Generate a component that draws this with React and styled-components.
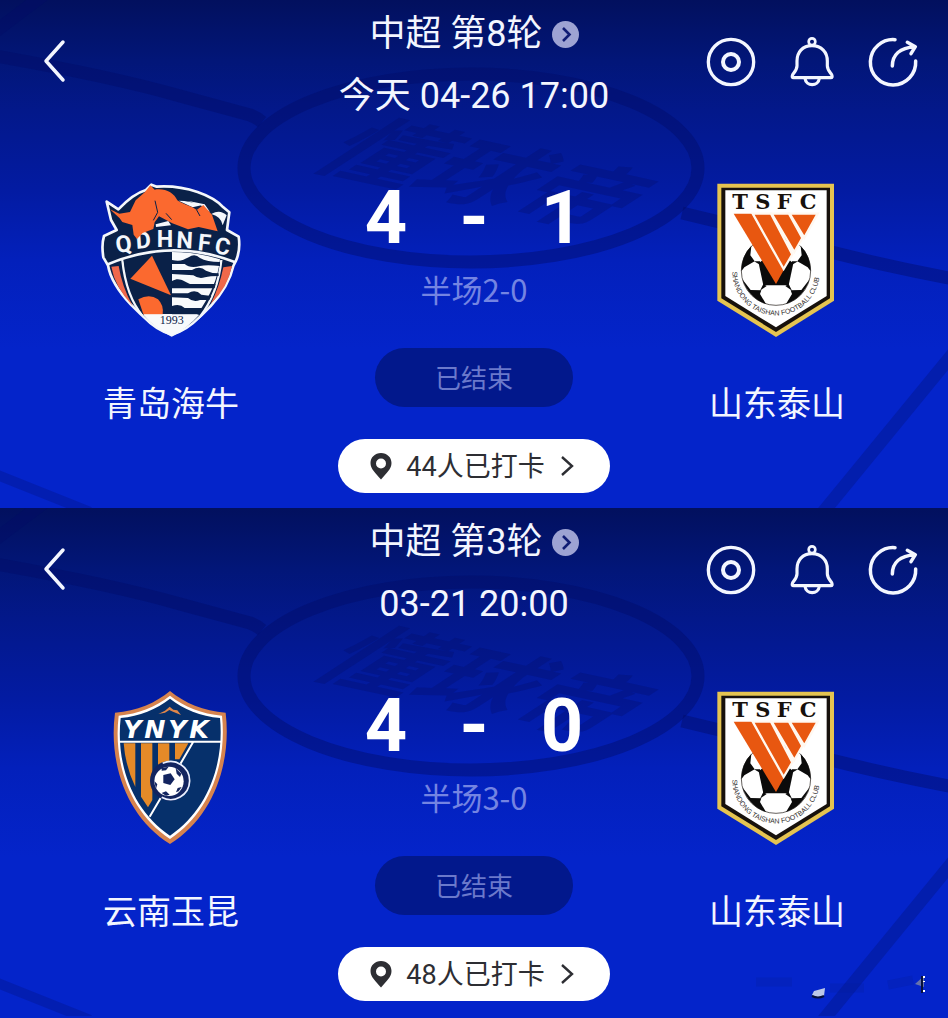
import React from 'react';
import styled, { createGlobalStyle } from 'styled-components';

const GlobalStyle = createGlobalStyle`
  * { box-sizing: border-box; }
  body { margin: 0; background: #0424ca; }
  button { font: inherit; color: inherit; border: 0; padding: 0; background: none; cursor: pointer; }
  h1, h2, p { margin: 0; font-weight: 400; }
`;

const Page = styled.main`
  display: flex;
  flex-direction: column;
  min-height: 100vh;
  color: #f3f6ff;
  font-family: Roboto, 'Noto Sans CJK SC', sans-serif;
`;

const Panel = styled.section`
  position: relative;
  overflow: hidden;
  flex-grow: ${(p) => (p.$last ? 1 : 0)};
  padding: 12px 0 15px;
  background: linear-gradient(#02105e 0, #021678 60px, #03188a 110px, #031ba2 190px, #0320bb 260px, #0424ca 350px);
`;

const Pitch = styled.svg`
  position: absolute;
  top: 0;
  left: 0;
  width: 100%;
  height: 508px;
`;

const Header = styled.header`
  position: relative;
  display: grid;
  grid-template-columns: 1fr auto 1fr;
  align-items: start;
  padding: 0 30px;
`;

const Titles = styled.div`
  display: flex;
  flex-direction: column;
  align-items: center;
  gap: 18px;
  font-size: 36px;
  line-height: 44px;
  white-space: nowrap;
`;

const Round = styled.button`
  display: flex;
  align-items: center;
  gap: 9px;
  line-height: 44px;
`;

const Kickoff = styled.p``;

const Actions = styled.nav`
  display: flex;
  justify-content: ${(p) => (p.$end ? 'flex-end' : 'flex-start')};
  gap: 31px;
  padding-top: 25px;
`;

const IconButton = styled.button`
  width: 50px;
  height: 50px;
  svg { display: block; width: 100%; height: 100%; }
`;

const Body = styled.div`
  position: relative;
  display: grid;
  grid-template-columns: 1fr 272px 1fr;
  padding: 65px 4px 0;
`;

const Team = styled.div`
  display: flex;
  flex-direction: column;
  align-items: center;
  gap: 45px;
`;

const Crest = styled.svg`
  width: 160px;
  height: 154px;
`;

const TeamName = styled.h2`
  font-size: 34px;
  line-height: 44px;
`;

const Center = styled.div`
  display: flex;
  flex-direction: column;
  align-items: center;
`;

const Score = styled.p`
  display: grid;
  grid-template-columns: 88px 88px 88px;
  justify-items: center;
  color: #fff;
  font-size: 74px;
  font-weight: 700;
  line-height: 70px;
`;

const HalfTime = styled.p`
  margin: 16px 0 39px;
  color: #7484e2;
  font-family: 'Noto Sans CJK SC', sans-serif;
  font-size: 31px;
  line-height: 40px;
`;

const Status = styled.p`
  width: 198px;
  padding-top: 3px;
  border-radius: 30px;
  background: #02188c;
  color: #6b79cb;
  font-size: 26px;
  line-height: 56px;
  text-align: center;
`;

const CheckIn = styled.button`
  display: flex;
  align-items: center;
  justify-content: center;
  gap: 14px;
  width: 100%;
  height: 54px;
  margin-top: 32px;
  padding-right: 3px;
  border-radius: 27px;
  background: #fff;
  color: #2d2e33;
  font-size: 27px;
  line-height: 51px;
  white-space: nowrap;
  span { padding-top: 3px; }
`;

const Glints = styled.svg`
  position: absolute;
  right: 0;
  bottom: 0;
  width: 218px;
  height: 68px;
`;

function PitchLines() {
  return (
    <Pitch viewBox="0 0 948 508" preserveAspectRatio="xMidYMin slice" aria-hidden="true">
      <g fill="none" stroke="#020d66" strokeOpacity=".42" strokeWidth="13">
        <path d="M-10 55Q110 76 180 96L250 115Q256 117 262 122M682 213L740 227Q850 260 960 280" />
        <ellipse cx="471" cy="168" rx="227" ry="94" />
        <path d="M956 350L820 516" strokeOpacity=".28" />
        <path d="M-10 472L90 512" strokeOpacity=".24" strokeWidth="10" />
        <path d="M-8 34L50 -10" strokeWidth="13" />
      </g>
      <text
        transform="matrix(1.02 .22 -.95 .62 306 165)"
        fill="#020d66"
        fillOpacity=".3"
        fontFamily="'Noto Sans CJK SC', sans-serif"
        fontSize="96"
        fontWeight="700"
      >
        懂球帝
      </text>
    </Pitch>
  );
}

const line = { fill: 'none', stroke: 'currentColor', strokeLinecap: 'round', strokeLinejoin: 'round' };

const BackIcon = () => (
  <svg viewBox="0 0 50 50" {...line} strokeWidth="3.5">
    <path d="M33 5L16 24L33 43" />
  </svg>
);

const WatchIcon = () => (
  <svg viewBox="0 0 150 150" {...line} strokeWidth="10">
    <circle cx="75" cy="75" r="68" />
    <circle cx="75" cy="75" r="24" strokeWidth="12" />
  </svg>
);

const BellIcon = () => (
  <svg viewBox="0 0 150 150" {...line} strokeWidth="9.500">
    <circle cx="75" cy="14" r="10" strokeWidth="8" />
    <path d="M75 26C46 26 30 46 30 72V86C30 97 25 102 17 113Q13 122 20 122H131Q138 122 134 113C126 102 121 97 121 86V72C121 46 104 26 75 26Z" />
    <path d="M54 124C57 149 94 149 97 124" />
  </svg>
);

const ShareIcon = () => (
  <svg viewBox="0 0 150 150" {...line} strokeWidth="10.500">
    <path d="M81 8A68 68 0 1 0 143 72" />
    <path d="M73 87C73 54 96 32 140 29M118 16L142 29L129 50" />
  </svg>
);

const RoundArrow = () => (
  <svg width="27" height="27" viewBox="0 0 27 27" aria-hidden="true">
    <circle cx="13.5" cy="13.5" r="13.5" fill="#9da3d3" />
    <path d="M11 7L17.5 13.5L11 20" fill="none" stroke="#101c74" strokeWidth="2.6" />
  </svg>
);

const PinIcon = () => (
  <svg width="22" height="28" viewBox="0 0 22 28" aria-hidden="true">
    <path fillRule="evenodd" fill="#2d2e33" d="M11 1C5 1 .5 5.400 .5 11C.5 17 5.500 21 11 27.500C16.500 21 21.500 17 21.500 11C21.500 5.400 17 1 11 1ZM11 6.500A5 5 0 1 1 11 16.500A5 5 0 1 1 11 6.500Z" />
  </svg>
);

const ChevronIcon = () => (
  <svg width="16" height="22" viewBox="0 0 16 22" aria-hidden="true">
    <path d="M3 2L13 11L3 20" fill="none" stroke="#2d2e33" strokeWidth="2.400" />
  </svg>
);

function QingdaoCrest() {
  return (
    <Crest viewBox="3 39 480 462" role="img" aria-label="青岛海牛">
      <path
        d="M245 496C160 455 66 360 54 286L40 262Q34 225 42 198L80 180L63 150L50 95L85 118C110 92 140 68 168 60L184 44L200 50C290 44 370 78 400 112L418 127L411 180L446 200Q452 240 438 272L430 288C412 370 330 455 245 496Z"
        fill="#0a2148" stroke="#f4f7fb" strokeWidth="8" strokeLinejoin="round"
      />
      <path d="M64 290L86 288Q96 350 128 408Q74 350 64 290Z" fill="#f0684a" />
      <path d="M426 288L400 292Q388 352 362 402Q414 352 426 288Z" fill="#f0684a" />
      <path d="M97 270Q108 380 160 440Q200 482 245 494Q290 482 330 440Q384 370 394 270" fill="#0a2148" stroke="#f4f7fb" strokeWidth="7" />
      <path d="M246 246Q322 246 390 268Q382 350 322 432H160Q200 482 245 494Q292 480 324 432L246 414Z" fill="#f8fafc" />
      <g fill="#0a2148">
        <path d="M246 270C270 276 280 270 296 262Q314 248 330 264Q350 276 390 276V288Q350 284 330 288Q300 296 284 282H246Z" />
        <path d="M246 300H306Q330 286 348 302Q364 310 386 310V318Q360 318 345 322Q326 328 310 316L246 312Z" />
        <path d="M246 333C270 320 282 336 300 342H377L374 355H246Z" />
        <path d="M246 370H294Q316 356 334 374L364 378L358 390H330Q310 398 294 384L246 382Z" />
        <path d="M246 408Q270 400 284 414H342L324 433H246Z" />
        <path d="M100 265L245 246V432H158Q116 370 100 265Z" />
      </g>
      <path d="M186 257L121 326L243 376Z" fill="#fb692f" />
      <path d="M145 388Q178 370 204 388Q222 406 218 433H160Z" fill="#fb692f" />
      <path d="M160 434H328Q290 478 245 490Q198 478 160 434Z" fill="#f8fafc" />
      <path d="M50 284Q245 202 436 277" fill="none" stroke="#f4f7fb" strokeWidth="8" />
      <path d="M266 92Q300 92 334 106L308 112ZM292 92L344 103L360 126L332 106ZM364 132Q390 116 410 136L398 166Q394 140 364 132Z" fill="#f4f7fb" />
      <text x="80 139 200 258 322 371" y="249 236 231 233 240 249" rotate="-8 -4 0 3 6 10" fill="#f4f7fb" fontFamily="Roboto, sans-serif" fontSize="70" fontWeight="700">QDHNFC</text>
      <path d="M197 163L235 153L243 166L198 171Z" fill="#f4f7fb" />
      <path
        d="M60 118L88 131L120 126L137 91L165 66L181 46L194 59C226 54 252 69 262 91C284 106 307 109 320 120L340 105L366 134L383 184L326 171L294 178L247 160L207 139L194 157L190 177L158 189L141 207L131 194L127 165L97 156L89 145Z"
        fill="#fb692f"
      />
      <path d="M195 92L203 127L190 151M228 130L245 149M320 120L330 138" fill="none" stroke="#0a2148" strokeWidth="3" />
      <text x="245" y="462" textAnchor="middle" fill="#0a2148" fontFamily="'Liberation Serif', serif" fontSize="36">1993</text>
    </Crest>
  );
}

function ShandongCrest({ id }) {
  return (
    <Crest viewBox="-9 39 480 462" role="img" aria-label="山东泰山">
      <path d="M52 41H402V392L228 501L52 392Z" fill="#e5c451" />
      <path d="M64 53H390V385L228 486L64 385Z" fill="#17110c" />
      <path d="M76 61H380V378L228 472L76 378Z" fill="#fff" />
      <text x="97 166 230 299" y="117" fill="#17110c" fontFamily="'DejaVu Serif', serif" fontSize="63" fontWeight="700">TSFC</text>
      <circle cx="228" cy="302" r="104" fill="#fff" stroke="#17110c" strokeWidth="2" />
      <g fill="#0b0b0b">
        <path d="M188 207Q228 191 268 207L252 216H204Z" />
        <path d="M154 228L151 256L164 274L133 292L124 304Q124 258 154 228Z" />
        <path d="M302 228L305 256L292 274L323 292L332 304Q332 258 302 228Z" />
        <path d="M176 280L228 238L280 280L266 346H190Z" />
        <path d="M127 328L152 360L184 361L180 372L198 402Q148 386 127 328Z" />
        <path d="M329 328L304 360L272 361L276 372L258 402Q308 386 329 328Z" />
        <path d="M162 274H180V284ZM276 284V274H294ZM180 362L190 342L200 348ZM256 348L266 342L276 362Z" />
      </g>
      <g fill="#e85710" stroke="#fff8f0" strokeWidth="7">
        <path d="M101 131H156L251 301L228 342Z" stroke="none" />
        <path d="M158 131H213L277 253L251 297Z" />
        <path d="M215 131H267L307 204L283 246Z" />
        <path d="M269 131H353L313 203Z" />
      </g>
      <path id={id} d="M97 305A131 131 0 0 0 359 305" fill="none" />
      <text fill="#33302e" fontFamily="'Liberation Sans', sans-serif" fontSize="21">
        <textPath href={`#${id}`}>SHANDONG TAISHAN FOOTBALL CLUB</textPath>
      </text>
    </Crest>
  );
}

function YunnanCrest() {
  return (
    <Crest viewBox="3 33 480 462" role="img" aria-label="云南玉昆">
      <path d="M240 33C198 68 140 94 75 98C55 250 110 412 240 492C370 412 425 250 407 98C342 94 282 68 240 33Z" fill="#d6834e" />
      <path d="M240 47C198 80 145 102 86 107C69 250 120 398 240 477C360 398 411 250 396 107C336 102 282 80 240 47Z" fill="#fff" />
      <path d="M240 56C200 88 148 109 92 114C77 250 126 390 240 467C354 390 403 250 390 114C332 109 280 88 240 56Z" fill="#06306b" />
      <path d="M205 102L225 92L239 80L250 89L262 91L273 105L249 95L238 90L225 98Z" fill="#e0874a" />
      <g fill="#e58a28">
        <path d="M101 190H136V321Q106 258 101 190Z" />
        <path d="M153 190H187V360L174 382L153 350Z" />
        <path d="M204 190H238V255H204Z" />
        <path d="M255 190H295L268 238H255Z" />
      </g>
      <path d="M88 185H393M309 187L268 257M216 347L179 410" stroke="#fff" strokeWidth="6" />
      <circle cx="240" cy="302" r="60" fill="#12245f" />
      <path d="M218 250A57 57 0 1 1 215 352" fill="none" stroke="#e9efff" strokeWidth="5" />
      <circle cx="237" cy="304" r="44" fill="#fff" />
      <g fill="#12245f">
        <path d="M220 285L242 280L254 298L241 315L220 309Z" />
        <path d="M215 264L236 260L228 271L215 272ZM257 265L274 281L270 291L260 281ZM193 303L202 313L198 326ZM275 321L263 324L258 337L266 334ZM215 339L228 334L239 344L228 347Z" />
      </g>
      <text x="100 163 235 298" y="173" fill="#fff" fontFamily="'DejaVu Sans', sans-serif" fontSize="76" fontStyle="italic" fontWeight="700">YNYK</text>
    </Crest>
  );
}

function Match({ round, kickoff, home, homeCrest, homeScore, awayScore, half, visitors, last }) {
  return (
    <Panel $last={last}>
      <PitchLines />
      {last && (
        <Glints viewBox="0 0 218 68" aria-hidden="true">
          <path d="M26 32H62M100 38H134M158 35L183 30" stroke="#031c98" strokeOpacity=".22" strokeWidth="9" />
          <path d="M84 41L95 38L94 46Q88 49 82 45Z" fill="#bcc8e8" />
          <path d="M82 46Q88 49 94 46" fill="none" stroke="#06103c" strokeWidth="2" />
          <path d="M185 34L194 26V37Z" fill="#6673ac" />
          <path d="M192 26V43" stroke="#06103c" strokeWidth="2" />
          <path d="M194 26V28M194 31V32M194 40V42" stroke="#fff" strokeWidth="2" />
        </Glints>
      )}
      <Header>
        <Actions>
          <IconButton aria-label="返回"><BackIcon /></IconButton>
        </Actions>
        <Titles>
          <Round><span>{round}</span><RoundArrow /></Round>
          <Kickoff>{kickoff}</Kickoff>
        </Titles>
        <Actions $end>
          <IconButton aria-label="直播"><WatchIcon /></IconButton>
          <IconButton aria-label="提醒"><BellIcon /></IconButton>
          <IconButton aria-label="分享"><ShareIcon /></IconButton>
        </Actions>
      </Header>
      <Body>
        <Team>
          {homeCrest}
          <TeamName>{home}</TeamName>
        </Team>
        <Center>
          <Score><span>{homeScore}</span><span>-</span><span>{awayScore}</span></Score>
          <HalfTime>半场{half}</HalfTime>
          <Status>已结束</Status>
          <CheckIn><PinIcon /><span>{visitors}人已打卡</span><ChevronIcon /></CheckIn>
        </Center>
        <Team>
          <ShandongCrest id={`ring-${visitors}`} />
          <TeamName>山东泰山</TeamName>
        </Team>
      </Body>
    </Panel>
  );
}

export default function App() {
  return (
    <Page>
      <GlobalStyle />
      <Match round="中超 第8轮" kickoff="今天 04-26 17:00" home="青岛海牛" homeCrest={<QingdaoCrest />} homeScore={4} awayScore={1} half="2-0" visitors={44} />
      <Match round="中超 第3轮" kickoff="03-21 20:00" home="云南玉昆" homeCrest={<YunnanCrest />} homeScore={4} awayScore={0} half="3-0" visitors={48} last />
    </Page>
  );
}
